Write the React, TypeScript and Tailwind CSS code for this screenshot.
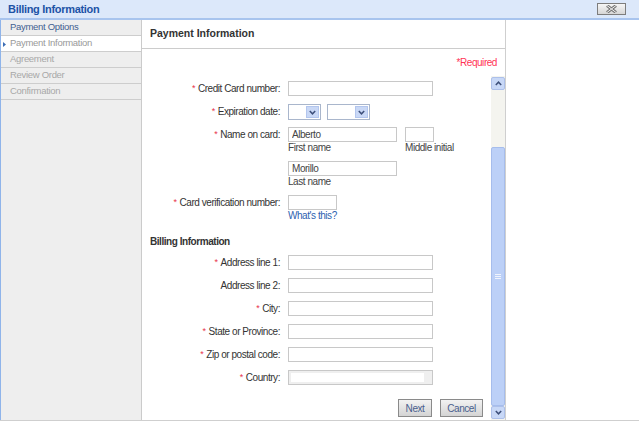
import React from 'react';

const Req = () => <span className="text-[#e8334a] text-[9px] leading-none mr-[3px] relative -top-[1px]">*</span>;

type RowProps = { label: string; required?: boolean; className?: string; children: React.ReactNode };

const Row = ({ label, required, className = '', children }: RowProps) => (
  <div className={`flex items-start ${className}`}>
    <div className="w-[146px] h-[15px] shrink-0 pr-[8px] text-right leading-[15px] text-[#333333] whitespace-nowrap">
      {required && <Req />}
      {label}:
    </div>
    <div>{children}</div>
  </div>
);

const TextBox = ({ width, value = '' }: { width: string; value?: string }) => (
  <input
    readOnly
    value={value}
    className={`block h-[15px] ${width} border border-[#c8c8c8] bg-white px-[3px] text-[10px] leading-[13px] text-[#444444] outline-none`}
  />
);

const Chevron = ({ up = false }: { up?: boolean }) => (
  <svg width="7" height="5" viewBox="0 0 7 5" className={up ? 'rotate-180' : ''}>
    <path d="M0.8 1 L3.5 3.8 L6.2 1" fill="none" stroke="#3d4f7a" strokeWidth="1.5" />
  </svg>
);

const Select = ({ width }: { width: string }) => (
  <div className={`h-[16px] ${width} border border-[#a9b6cc] bg-white flex justify-end p-[1px]`}>
    <div className="w-[13px] h-full bg-[#c9d8f6] border border-[#b3c6ee] flex items-center justify-center">
      <Chevron />
    </div>
  </div>
);

const SideItem = ({ label, state }: { label: string; state: 'done' | 'active' | 'todo' }) => (
  <div
    className={`h-[16px] border-b border-[#cdcdcd] pl-[9px] flex items-center relative ${
      state === 'active' ? 'bg-white text-[#9a9a9a]' : state === 'done' ? 'text-[#3f5f92]' : 'text-[#a8a8a8]'
    }`}
  >
    {state === 'active' && (
      <svg width="3" height="5" viewBox="0 0 3 5" className="absolute left-[2px] top-[6px]">
        <path d="M0 0 L3 2.5 L0 5 Z" fill="#3d6db5" />
      </svg>
    )}
    {label}
  </div>
);

const Button = ({ label, width }: { label: string; width: string }) => (
  <div
    className={`h-[18px] ${width} border border-[#8a8a8a] bg-gradient-to-b from-[#f2f2f2] to-[#d4d4d4] text-[#4a5f8e] flex items-center justify-center`}
  >
    {label}
  </div>
);

export default function App() {
  return (
    <div className="w-[639px] h-[422px] bg-white overflow-hidden text-[10px] tracking-[-0.45px] font-[family-name:'Liberation_Sans',Arial,sans-serif]">
      <div className="h-[20px] bg-[#dce8fa] border-b-2 border-[#a8c4ee] flex items-center justify-between pl-[8px] pr-[13px]">
        <span className="font-bold text-[11px] tracking-[-0.3px] text-[#1d53a6]">Billing Information</span>
        <div className="w-[29px] h-[12px] border border-[#7d7d7d] bg-gradient-to-b from-[#f6f6f6] to-[#d6d6d6] flex items-center justify-center">
          <svg width="11" height="8" viewBox="0 0 11 8">
            <path d="M1 0.5 L10 7.5 M10 0.5 L1 7.5" stroke="#777777" strokeWidth="3" />
            <path d="M1 0.5 L10 7.5 M10 0.5 L1 7.5" stroke="#f2f2f2" strokeWidth="1" />
          </svg>
        </div>
      </div>

      <div className="flex h-[401px] border-b border-[#cfcfcf]">
        <div className="w-[142px] shrink-0 bg-[#eeeeee] border-l border-l-[#8fb4ea] border-r border-r-[#cbcbcb] text-[9.5px] tracking-[-0.3px]">
          <SideItem label="Payment Options" state="done" />
          <SideItem label="Payment Information" state="active" />
          <SideItem label="Agreement" state="todo" />
          <SideItem label="Review Order" state="todo" />
          <SideItem label="Confirmation" state="todo" />
        </div>

        <div className="w-[364px] shrink-0 border-r border-[#cfcfcf] flex flex-col">
          <div className="h-[29px] shrink-0 border-b border-[#cccccc] flex items-center pl-[8px] font-bold text-[#333333] text-[10.5px] tracking-normal">
            Payment Information
          </div>
          <div className="h-[27px] shrink-0 flex items-center justify-end pr-[8px] text-[#ff3355]">*Required</div>

          <div className="flex-1 flex min-h-0">
            <div className="flex-1 min-w-0">
              <Row label="Credit Card number" required className="mt-[5px]">
                <TextBox width="w-[145px]" />
              </Row>
              <Row label="Expiration date" required className="mt-[8px]">
                <div className="flex gap-[6px]">
                  <Select width="w-[33px]" />
                  <Select width="w-[43px]" />
                </div>
              </Row>
              <Row label="Name on card" required className="mt-[7px]">
                <div className="flex gap-[8px]">
                  <div>
                    <TextBox width="w-[109px]" value="Alberto" />
                    <div className="leading-[12px] text-[#444444]">First name</div>
                  </div>
                  <div>
                    <TextBox width="w-[29px]" />
                    <div className="leading-[12px] text-[#444444] whitespace-nowrap">Middle initial</div>
                  </div>
                </div>
              </Row>
              <Row label="" className="mt-[7px] [&>div:first-child]:invisible">
                <TextBox width="w-[109px]" value="Morillo" />
                <div className="leading-[12px] text-[#444444]">Last name</div>
              </Row>
              <Row label="Card verification number" required className="mt-[7px]">
                <TextBox width="w-[49px]" />
                <div className="leading-[12px] text-[#2d5fb0]">What's this?</div>
              </Row>

              <div className="mt-[14px] pl-[8px] leading-[12px] font-bold text-[#333333]">Billing Information</div>

              <Row label="Address line 1" required className="mt-[7px]">
                <TextBox width="w-[145px]" />
              </Row>
              <Row label="Address line 2" className="mt-[8px]">
                <TextBox width="w-[145px]" />
              </Row>
              <Row label="City" required className="mt-[8px]">
                <TextBox width="w-[145px]" />
              </Row>
              <Row label="State or Province" required className="mt-[8px]">
                <TextBox width="w-[145px]" />
              </Row>
              <Row label="Zip or postal code" required className="mt-[8px]">
                <TextBox width="w-[145px]" />
              </Row>
              <Row label="Country" required className="mt-[8px]">
                <div className="h-[15px] w-[145px] border border-[#c8c8c8] bg-[#efefef] pl-[2px] pr-[8px] py-[2px]">
                  <div className="h-full bg-white" />
                </div>
              </Row>

              <div className="mt-[14px] flex justify-end gap-[8px] pr-[8px]">
                <Button label="Next" width="w-[34px]" />
                <Button label="Cancel" width="w-[43px]" />
              </div>
            </div>

            <div className="w-[14px] shrink-0 flex flex-col pt-[1px] pb-[1px] bg-[#f4f4ef]">
              <div className="h-[13px] shrink-0 bg-[#c8d8f7] border border-[#adc0ea] rounded-[2px] flex items-center justify-center">
                <Chevron up />
              </div>
              <div className="h-[57px] shrink-0" />
              <div className="flex-1 bg-[#bcd0f7] border border-[#a6bdec] rounded-[2px] flex items-center justify-center">
                <svg width="6" height="6" viewBox="0 0 6 6">
                  <path d="M0 0.5 H6 M0 2.5 H6 M0 4.5 H6" stroke="#f0f4fd" strokeWidth="1" />
                </svg>
              </div>
              <div className="h-[13px] shrink-0 bg-[#c8d8f7] border border-[#adc0ea] rounded-[2px] flex items-center justify-center">
                <Chevron />
              </div>
            </div>
          </div>
        </div>

        <div className="flex-1" />
      </div>
    </div>
  );
}
